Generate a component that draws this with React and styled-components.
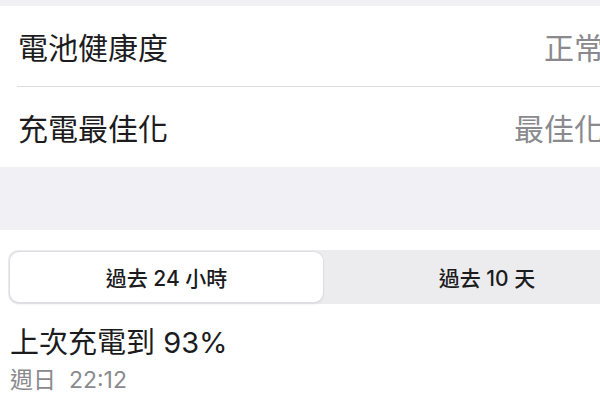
import styled, { createGlobalStyle } from "styled-components"

const GlobalStyle = createGlobalStyle`
	html, body {
		margin: 0;
		padding: 0;
		background: #f0f0f5;
	}
	body {
		font-family: Inter, "Noto Sans CJK TC", sans-serif;
		-webkit-font-smoothing: antialiased;
	}
`

const settings = [
	{ label: "電池健康度", value: "正常" },
	{ label: "充電最佳化", value: "最佳化" },
]

function App () {
	return (
		<>
			<GlobalStyle />
			<Page>
				<Gap $height={6} />
				<Group>
					{settings.map((s, i) => (
						<Row key={s.label}>
							<RowInner $last={i === settings.length - 1}>
								<Label>{s.label}</Label>
								<Value>{s.value}</Value>
							</RowInner>
						</Row>
					))}
				</Group>
				<Gap $height={63} />
				<Card>
					<Segmented>
						<Segment $active>過去 24 小時</Segment>
						<Segment>過去 10 天</Segment>
					</Segmented>
					<Title>上次充電到 93%</Title>
					<Subtitle>週日&nbsp; 22:12</Subtitle>
				</Card>
			</Page>
		</>
	)
}

const Page = styled.div`
	width: 600px;
	height: 400px;
	overflow: hidden;
	display: flex;
	flex-direction: column;
`

const Gap = styled.div`
	flex: none;
	height: ${p => p.$height}px;
	background: #f0f0f5;
`

const Group = styled.div`
	background: #fff;
`

const Row = styled.div`
	padding-left: 17px;
`

const RowInner = styled.div`
	height: 80px;
	display: flex;
	align-items: center;
	justify-content: space-between;
	border-bottom: ${p => p.$last ? "none" : "1px solid #dcdce0"};
	margin-right: -4px;
`

const Label = styled.span`
	font-size: 30px;
	color: #1c1c1e;
	padding-left: 1px;
`

const Value = styled.span`
	font-size: 30px;
	color: #8a8a8e;
	white-space: nowrap;
`

const Card = styled.div`
	flex: 1;
	background: #fff;
	padding: 20px 0 0 8px;
	overflow: hidden;
`

const Segmented = styled.div`
	display: grid;
	grid-template-columns: 313px 328px;
	width: max-content;
	padding: 2px;
	height: 50px;
	background: #ececef;
	border-radius: 10px;
`

const Segment = styled.div`
	display: flex;
	align-items: center;
	justify-content: center;
	font-size: 21px;
	font-weight: 500;
	color: #1c1c1e;
	border-radius: 9px;
	background: ${p => p.$active ? "#fff" : "transparent"};
	box-shadow: ${p => p.$active ? "0 0 0 1px #dedee2, 0 2px 3px rgba(0, 0, 0, 0.08)" : "none"};
`

const Title = styled.div`
	margin-top: 22px;
	padding-left: 2px;
	font-size: 29px;
	line-height: 34px;
	color: #1c1c1e;
`

const Subtitle = styled.div`
	margin-top: 6px;
	padding-left: 2px;
	font-size: 23px;
	line-height: 28px;
	color: #8a8a8e;
`

export default App
